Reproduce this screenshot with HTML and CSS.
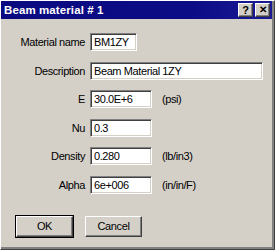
FILE: index.html
```html
<!DOCTYPE html>
<html lang="en">
<head>
  <meta charset="UTF-8">
  <title>Beam material # 1</title>
  <link rel="stylesheet" href="styles.css">
</head>
<body>
  <div class="window">
    <div class="titlebar">
      <span class="title">Beam material # 1</span>
      <span class="tbtn">?</span>
      <span class="tbtn close">&#x2715;</span>
    </div>

    <div class="form">
      <label for="name">Material name</label>
      <input class="field short" id="name" value="BM1ZY">
      <span></span>

      <label for="desc">Description</label>
      <input class="field wide" id="desc" value="Beam Material 1ZY">

      <label for="e">E</label>
      <input class="field" id="e" value="30.0E+6">
      <span class="unit">(psi)</span>

      <label for="nu">Nu</label>
      <input class="field" id="nu" value="0.3">
      <span></span>

      <label for="density">Density</label>
      <input class="field" id="density" value="0.280">
      <span class="unit">(lb/in3)</span>

      <label for="alpha">Alpha</label>
      <input class="field" id="alpha" value="6e+006">
      <span class="unit">(in/in/F)</span>
    </div>

    <div class="buttons">
      <button class="btn default">OK</button>
      <button class="btn">Cancel</button>
    </div>
  </div>
</body>
</html>
```

FILE: styles.css
```css
body { margin: 0; background: #d4d0c8; font-family: "Liberation Sans", Arial, sans-serif; font-size: 11px; color: #000; }
.window { width: 275px; height: 250px; box-sizing: border-box; background: #d4d0c8; border-top: 1px solid #fff; border-left: 1px solid #fff; border-right: 1px solid #404040; border-bottom: 1px solid #404040; box-shadow: inset -2px -2px #808080; padding: 0 2px 0 0; letter-spacing: -0.4px; }
.titlebar { height: 18px; display: flex; align-items: center; background: linear-gradient(to right, #0a0a80, #0c0c86 70%, #1a1a96); padding: 0 2px 0 3px; letter-spacing: 0; }
.title { flex: 1; color: #fff; font-weight: bold; font-size: 11.5px; letter-spacing: 0.1px; }
.tbtn { width: 15px; height: 14px; box-sizing: border-box; background: #d4d0c8; border-top: 1px solid #fff; border-left: 1px solid #fff; border-right: 1px solid #404040; border-bottom: 1px solid #404040; box-shadow: inset -1px -1px #808080; font-weight: bold; font-size: 11px; line-height: 12px; text-align: center; margin-left: 2px; }
.close { font-size: 10px; }
.form { display: grid; grid-template-columns: 89px auto 1fr; grid-auto-rows: 18px; row-gap: 10.5px; align-items: center; margin-top: 14px; }
.form label { text-align: right; padding-right: 5px; }
.field { box-sizing: border-box; height: 18px; width: 62px; margin: 0; padding: 0 0 0 3px; font-family: inherit; font-size: 11px; letter-spacing: -0.4px; background: #fff; color: #000; border-top: 1px solid #808080; border-left: 1px solid #808080; border-right: 1px solid #fff; border-bottom: 1px solid #fff; box-shadow: inset 1px 1px #404040, inset -1px -1px #d4d0c8; outline: none; }
.short { width: 47px; }
.wide { width: 173px; grid-column: 2 / 4; }
.unit { padding-left: 10px; }
.buttons { display: flex; gap: 12px; margin: 22px 0 0 15px; }
.btn { width: 57px; height: 21px; margin: 0; padding: 0; font-family: inherit; font-size: 11px; letter-spacing: inherit; color: #000; background: #d4d0c8; border-top: 1px solid #fff; border-left: 1px solid #fff; border-right: 1px solid #404040; border-bottom: 1px solid #404040; box-shadow: inset -1px -1px #808080; }
.default { outline: 1px solid #000; }
```
